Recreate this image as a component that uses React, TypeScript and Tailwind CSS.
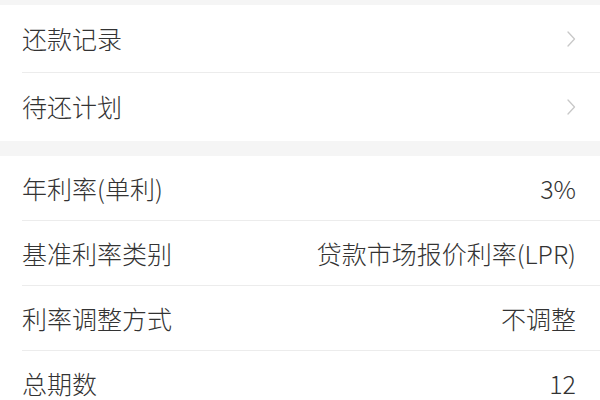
import React from "react";

const Chevron = () => (
  <svg width="10" height="18" viewBox="0 0 10 18" fill="none">
    <path d="M2 2 L8.5 9 L2 16" stroke="#c8c8c8" strokeWidth="1.3" strokeLinecap="round" strokeLinejoin="round" />
  </svg>
);

const NavRow = ({ label, divider }: { label: string; divider?: boolean }) => (
  <div className="relative flex h-[68px] items-center justify-between pl-[22px] pr-[24px]">
    <span>{label}</span>
    <Chevron />
    {divider && <div className="absolute bottom-0 left-[22px] right-0 h-px bg-[#ececec]" />}
  </div>
);

const InfoRow = ({ label, value, divider }: { label: string; value: string; divider?: boolean }) => (
  <div className="relative flex h-[65px] items-center justify-between pl-[22px] pr-[24px]">
    <span>{label}</span>
    <span>{value}</span>
    {divider && <div className="absolute bottom-0 left-[22px] right-0 h-px bg-[#ececec]" />}
  </div>
);

export default function App() {
  return (
    <div
      className="h-[400px] w-[600px] overflow-hidden bg-[#f5f5f5] text-[25px] font-light text-[#333333]"
      style={{ fontFamily: '"Noto Sans CJK SC", "Noto Sans", sans-serif' }}
    >
      <div className="h-[5px]" />
      <div className="bg-white">
        <NavRow label="还款记录" divider />
        <NavRow label="待还计划" />
      </div>
      <div className="h-[15px]" />
      <div className="bg-white">
        <InfoRow label="年利率(单利)" value="3%" divider />
        <InfoRow label="基准利率类别" value="贷款市场报价利率(LPR)" divider />
        <InfoRow label="利率调整方式" value="不调整" divider />
        <InfoRow label="总期数" value="12" />
      </div>
    </div>
  );
}
